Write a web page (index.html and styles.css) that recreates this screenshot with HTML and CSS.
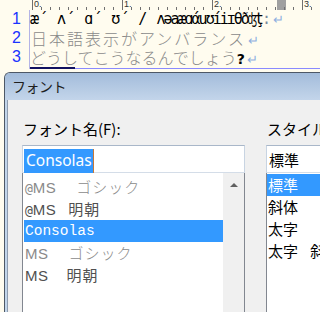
FILE: index.html
```html
<!DOCTYPE html>
<html lang="ja">
<head>
  <meta charset="UTF-8" />
  <title>フォント</title>
  <link rel="stylesheet" href="styles.css">
</head>
<body>

  <div class="editor">
    <div class="gutter">
      <div class="num">1</div>
      <div class="num">2</div>
      <div class="num">3</div>
    </div>
    <div class="pane">
      <div class="ruler">
        <span class="mark">0.</span>
        <span class="mark">1.</span>
        <span class="mark">2.</span>
        <span class="mark">3.</span>
      </div>
      <div class="lines">
        <div class="line l1"><span class="mono">æ´ ʌ´ ɑ´ ʊ´ / </span><span class="tight">ʌəaæɑάuʊíiɪθðʤţ</span><span class="colon">:</span><span class="ret">↵</span></div>
        <div class="line l2">日本語表示がアンバランス<span class="ret">↵</span></div>
        <div class="line l3">どうしてこうなるんでしょう<span class="q">?</span><span class="ret">↵</span></div>
      </div>
    </div>
  </div>

  <div class="dialog-area">
    <div class="dialog">
      <div class="titlebar">フォント</div>
      <div class="dialog-body">

        <div class="col col-font">
          <div class="label">フォント名(F):</div>
          <div class="input"><span class="sel-text">Consolas</span></div>
          <div class="list">
            <div class="items">
              <div class="row gothic"><span class="at">@</span><span class="ms">MS</span><span class="jp gap-g">ゴシック</span></div>
              <div class="row mincho"><span class="at">@</span><span class="ms">MS</span><span class="jp gap-m">明朝</span></div>
              <div class="row on mono-row">Consolas</div>
              <div class="row gothic"><span class="ms">MS</span><span class="jp gap-g">ゴシック</span></div>
              <div class="row mincho"><span class="ms">MS</span><span class="jp gap-m2">明朝</span></div>
            </div>
            <div class="scroll"><span class="arrow"></span></div>
          </div>
        </div>

        <div class="col col-style">
          <div class="label">スタイル(Y):</div>
          <div class="input plain">標準</div>
          <div class="list">
            <div class="items style-items">
              <div class="row on">標準</div>
              <div class="row">斜体</div>
              <div class="row">太字</div>
              <div class="row">太字 斜体</div>
            </div>
          </div>
        </div>

      </div>
    </div>
  </div>

</body>
</html>
```

FILE: styles.css
```css
* {
  box-sizing: border-box;
}

html, body {
  margin: 0;
}

body {
  width: 320px;
  height: 312px;
  overflow: hidden;
  background: #fffcef;
  font-family: "Noto Sans CJK JP", sans-serif;
  color: #000;
}

/* editor */

.editor {
  display: flex;
}

.gutter {
  width: 29px;
  flex: none;
  padding-top: 10px;
}

.num {
  height: 19px;
  line-height: 19px;
  text-align: right;
  padding-right: 8px;
  font: 16px "Liberation Sans", sans-serif;
  color: #1a33ff;
}

.pane {
  flex: 1;
  min-width: 0;
}

.ruler {
  height: 10px;
  display: flex;
  padding-left: 3px;
  background:
    repeating-linear-gradient(to right, #707070 0 1px, transparent 1px 9px) 3px 100% / 100% 3px no-repeat,
    linear-gradient(#a0a0a0, #a0a0a0) 248px 0 / 9px 100% no-repeat;
}

.mark {
  width: 90px;
  flex: none;
  border-left: 1px solid #707070;
  padding-left: 1px;
  font: 9px/9px "Liberation Sans", sans-serif;
  color: #333;
}

.lines {
  border-left: 1px solid #b4b4e6;
  padding-bottom: 2px;
  background:
    linear-gradient(#101060, #101060) 0 100% / 45px 2px no-repeat,
    linear-gradient(#8a8aff, #8a8aff) 0 100% / 100% 1px no-repeat;
}

.line {
  height: 19px;
  line-height: 19px;
  white-space: nowrap;
}

.l1 {
  font: 15px/19px "DejaVu Sans Mono", monospace;
}

.tight {
  letter-spacing: -2px;
}

.colon {
  color: #7a8aa0;
}

.l2 {
  font-size: 16px;
  font-weight: 300;
  letter-spacing: 2px;
  color: #8a8a8a;
  padding-left: 1px;
}

.l3 {
  font-size: 16px;
  font-weight: 300;
  color: #8a8a8a;
}

.q {
  color: #000;
  font: bold 14px "DejaVu Sans", sans-serif;
  letter-spacing: 0;
}

.ret {
  font: 300 13px "DejaVu Sans", sans-serif;
  color: #8fb0e0;
  letter-spacing: 0;
  margin-left: 2px;
}

/* dialog */

.dialog-area {
  padding: 3px 0 0 4px;
}

.dialog {
  height: 260px;
  overflow: hidden;
  border-left: 1px solid #4d5866;
  border-top: 1px solid #4d5866;
  border-top-left-radius: 6px;
  background: #c2d5ea;
}

.titlebar {
  height: 27px;
  line-height: 27px;
  padding-left: 7px;
  font-size: 14px;
  letter-spacing: -0.5px;
  color: #1e1e1e;
  background: linear-gradient(#a3bcdb, #c3d5ea);
}

.dialog-body {
  height: 240px;
  margin-left: 2px;
  border-left: 1px solid #8e9cae;
  background: #f0f0f0;
  padding: 19px 0 0 14px;
  display: flex;
  gap: 21px;
}

.col {
  flex: none;
}

.col-font {
  width: 223px;
}

.col-style {
  width: 150px;
}

.label {
  font-size: 15px;
  line-height: 20px;
  margin: 0 0 6px 1px;
  white-space: nowrap;
}

.input {
  height: 28px;
  border: 1px solid;
  border-color: #a9b7c9 #c8d4e2 #d4dde8 #c8d4e2;
  background: #fff;
  padding: 1px 0 0 1px;
}

.sel-text {
  display: inline-block;
  height: 24px;
  line-height: 24px;
  padding: 0 1px 0 2px;
  background: #3399ff;
  color: #fff;
  font: 15.5px "Noto Sans", sans-serif;
  border-right: 1px solid #c87837;
}

.input.plain {
  padding-left: 2px;
  font-size: 15px;
  line-height: 25px;
}

.list {
  height: 200px;
  display: flex;
  background: #fff;
  border-left: 1px solid #828790;
  border-right: 1px solid #828790;
}

.items {
  flex: 1;
  padding: 3px 0 0 1px;
}

.style-items {
  padding: 1px 0 0 0;
}

.row {
  height: 22px;
  line-height: 22px;
  font-size: 15px;
  padding-left: 1px;
  white-space: nowrap;
  word-spacing: 9px;
}

.row.on {
  background: #3399ff;
  color: #fff;
}

.gothic {
  color: #8a8a8a;
  font-weight: 300;
}

.mincho {
  color: #505050;
}

.at {
  font: 300 13px "DejaVu Sans Mono", monospace;
}

.ms {
  font: 15px "Liberation Sans", sans-serif;
  letter-spacing: 0.5px;
}

.jp {
  letter-spacing: 1px;
}

.gap-g {
  margin-left: 20px;
}

.gap-m {
  margin-left: 12px;
}

.gap-m2 {
  margin-left: 18px;
}

.mono-row {
  font: 14.5px/22px "Liberation Mono", monospace;
}

.scroll {
  width: 21px;
  flex: none;
  background: #f0f0f0;
  display: flex;
  justify-content: center;
  align-items: flex-start;
  padding-top: 10px;
}

.arrow {
  width: 0;
  height: 0;
  border-left: 4px solid transparent;
  border-right: 4px solid transparent;
  border-bottom: 4px solid #606060;
}
```
